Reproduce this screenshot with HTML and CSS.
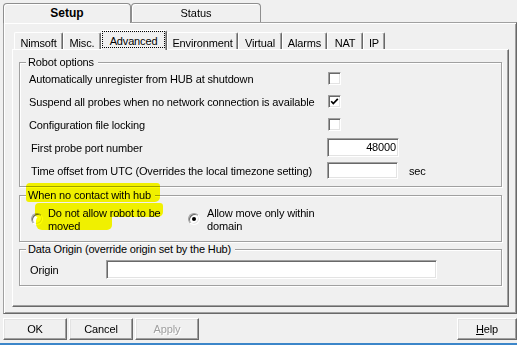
FILE: index.html
```html
<!DOCTYPE html>
<html>
<head>
<meta charset="utf-8">
<link rel="stylesheet" href="styles.css">
</head>
<body>
<div class="window">
  <div class="tabs">
    <div class="tab tab-setup">Setup</div>
    <div class="tab tab-status">Status</div>
  </div>
  <div class="panel">
    <div class="subtabs">
      <div class="subtab w-nimsoft">Nimsoft</div>
      <div class="subtab w-misc">Misc.</div>
      <div class="subtab active w-advanced"><span class="focus">Advanced</span></div>
      <div class="subtab w-env">Environment</div>
      <div class="subtab w-virtual">Virtual</div>
      <div class="subtab w-alarms">Alarms</div>
      <div class="subtab w-nat">NAT</div>
      <div class="subtab w-ip">IP</div>
    </div>
    <div class="page">
      <div class="group group-robot">
        <div class="legend">Robot options</div>
        <div class="rows">
          <div class="row"><span>Automatically unregister from HUB at shutdown</span><span class="check"></span></div>
          <div class="row"><span>Suspend all probes when no network connection is available</span><span class="check"><svg width="9" height="9" viewBox="0 0 9 9"><polyline points="1.2,4.2 3.3,6.6 7.8,1.8" fill="none" stroke="#000" stroke-width="1.7"/></svg></span></div>
          <div class="row"><span>Configuration file locking</span><span class="check"></span></div>
          <div class="row"><span class="lbl-shift">First probe port number</span><span class="field field-port">48000</span></div>
          <div class="row"><span class="lbl-shift">Time offset from UTC (Overrides the local timezone setting)</span><span class="field field-offset"></span><span class="unit">sec</span></div>
        </div>
      </div>
      <div class="group group-hub">
        <div class="legend">When no contact with hub</div>
        <div class="options">
          <span class="radio"></span>
          <span class="opt-text">Do not allow robot to be moved</span>
          <span class="radio radio-on radio-second"></span>
          <span class="opt-text opt-text-second">Allow move only within domain</span>
        </div>
        <div class="hl hl-a"></div>
        <div class="hl hl-b"></div>
        <div class="hl hl-c"></div>
      </div>
      <div class="group group-origin">
        <div class="legend">Data Origin (override origin set by the Hub)</div>
        <div class="origin-row">
          <span class="origin-label">Origin</span>
          <span class="field field-origin"></span>
        </div>
      </div>
    </div>
  </div>
  <div class="buttons">
    <div class="btn">OK</div>
    <div class="btn">Cancel</div>
    <div class="btn disabled">Apply</div>
    <div class="btn btn-help"><span><u>H</u>elp</span></div>
  </div>
  <div class="accent"></div>
</div>
</body>
</html>
```

FILE: styles.css
```css
* { box-sizing: border-box; }
html, body { margin: 0; padding: 0; background: #f0f0f0; }
body {
  font-family: "Liberation Sans", Arial, sans-serif;
  font-size: 11px;
  letter-spacing: -0.15px;
  color: #000;
}
.window {
  width: 517px;
  height: 345px;
  overflow: hidden;
  display: flex;
  flex-direction: column;
}

/* top tabs */
.tabs {
  display: flex;
  align-items: flex-end;
  height: 19px;
  margin: 3px 0 0 3px;
}
.tab {
  height: 19px;
  border: 1px solid #8e8e8e;
  border-bottom: none;
  border-radius: 4px 4px 0 0;
  box-shadow: inset 1px 1px 0 #fff;
  background: #f0f0f0;
  text-align: center;
  padding-top: 2px;
  line-height: 14px;
  letter-spacing: 0;
}
.tab-setup {
  width: 128px;
  height: 20px;
  margin-bottom: -1px;
  position: relative;
  z-index: 1;
  font-weight: bold;
  font-size: 12px;
}
.tab-status { width: 130px; }

/* main panel */
.panel {
  height: 292px;
  margin-left: 3px;
  border: 1px solid;
  border-color: #a0a0a0 #696969 #696969 #a0a0a0;
  box-shadow: inset 1px 1px 0 #fff, inset -1px -1px 0 #a0a0a0;
  padding: 7px 7px 6px 8px;
}
.subtabs {
  display: flex;
  align-items: flex-end;
  height: 19px;
  margin-left: 2px;
}
.subtab {
  height: 17px;
  border-top: 1px solid #fff;
  border-left: 1px solid #fff;
  border-right: 1px solid #696969;
  box-shadow: inset -1px 0 0 #a0a0a0;
  border-radius: 2px 2px 0 0;
  text-align: center;
  padding-top: 3px;
  line-height: 14px;
  white-space: nowrap;
  background: #f0f0f0;
}
.subtab.active {
  height: 20px;
  margin-bottom: -1px;
  position: relative;
  z-index: 1;
  padding: 0;
}
.focus {
  display: block;
  width: 63px;
  height: 17px;
  border: 1px dotted #000;
  padding-top: 3px;
  line-height: 12px;
}
.w-nimsoft { width: 49px; }
.w-misc { width: 38px; }
.w-advanced { width: 66px; }
.w-env { width: 71px; }
.w-virtual { width: 44px; }
.w-alarms { width: 45px; }
.w-nat { width: 36px; }
.w-ip { width: 22px; }

.page {
  height: 258px;
  border: 1px solid;
  border-color: #fff #696969 #696969 #fff;
  box-shadow: inset -1px -1px 0 #a0a0a0;
  padding: 0 6px;
}

/* group boxes */
.group {
  border: 1px solid #a0a0a0;
  box-shadow: 1px 1px 0 #fff, inset 1px 1px 0 #fff;
}
.group-robot { margin-top: 12px; }
.group-hub { margin-top: 8px; position: relative; }
.group-origin { margin-top: 7px; }
.legend {
  width: fit-content;
  margin: -7px 0 0 6px;
  padding: 0 4px 0 2px;
  background: #f0f0f0;
  line-height: 13px;
  white-space: nowrap;
  position: relative;
}

.rows { margin-top: -2px; padding: 0 0 4px 9px; }
.row {
  display: grid;
  grid-template-columns: 298px auto auto;
  justify-content: start;
  align-items: center;
  height: 23px;
  white-space: nowrap;
}
.lbl-shift { padding-left: 2px; }
.check {
  width: 13px;
  height: 13px;
  margin-left: 1px;
  background: #fff;
  border: 1px solid;
  border-color: #a0a0a0 #fff #fff #a0a0a0;
  box-shadow: inset 1px 1px 0 #696969, inset -1px -1px 0 #e3e3e3;
  display: flex;
  align-items: center;
  justify-content: center;
}
.check svg { display: block; }
.field {
  display: block;
  height: 19px;
  background: #fff;
  border: 1px solid;
  border-color: #a0a0a0 #fff #fff #a0a0a0;
  box-shadow: inset 1px 1px 0 #696969, inset -1px -1px 0 #e3e3e3;
  padding: 0 2px;
  line-height: 17px;
}
.field-port { width: 72px; text-align: right; }
.field-offset { width: 71px; height: 17px; }
.unit { margin-left: 11px; }

/* radios */
.options {
  display: flex;
  align-items: flex-start;
  margin-top: 5px;
  padding: 0 0 8px 11px;
  line-height: 13px;
}
.radio {
  flex: none;
  width: 12px;
  height: 12px;
  margin-top: 6px;
  border-radius: 50%;
  background: #fff;
  border: 1px solid;
  border-color: #a0a0a0 #fff #fff #a0a0a0;
  box-shadow: inset 1px 1px 0 #696969, inset -1px -1px 0 #e3e3e3;
  display: flex;
  align-items: center;
  justify-content: center;
}
.radio-on::after {
  content: "";
  width: 4px;
  height: 4px;
  border-radius: 50%;
  background: #000;
}
.radio-second { margin-left: 5px; }
.opt-text { margin-left: 5px; width: 135px; }
.opt-text-second { margin-left: 7px; width: 125px; }

.hl {
  position: absolute;
  background: #ffff00;
  mix-blend-mode: multiply;
  border-radius: 4px 3px 5px 3px;
}
.hl-a { left: 6px; top: -13px; width: 134px; height: 19px; }
.hl-b { left: 15px; top: 7px; width: 128px; height: 14px; }
.hl-c { left: 16px; top: 19px; width: 76px; height: 15px; border-radius: 6px 2px 5px 6px; }

/* origin */
.origin-row {
  display: flex;
  align-items: center;
  margin-top: 4px;
  padding: 0 0 6px 10px;
}
.origin-label { width: 76px; }
.field-origin { width: 331px; }

/* buttons */
.buttons {
  display: flex;
  height: 22px;
  margin-top: 4px;
  padding-left: 3px;
}
.btn {
  width: 64px;
  height: 22px;
  margin-right: 2px;
  display: flex;
  align-items: center;
  justify-content: center;
  border: 1px solid;
  border-color: #fff #696969 #696969 #fff;
  box-shadow: inset -1px -1px 0 #a0a0a0, inset 1px 1px 0 #e3e3e3;
  background: #f0f0f0;
}
.disabled { color: #a0a0a0; text-shadow: 1px 1px 0 #fff; }
.btn-help { margin-left: auto; margin-right: 0; width: 60px; }
.accent { height: 2px; margin-top: 3px; background: #3c86c9; }
```
